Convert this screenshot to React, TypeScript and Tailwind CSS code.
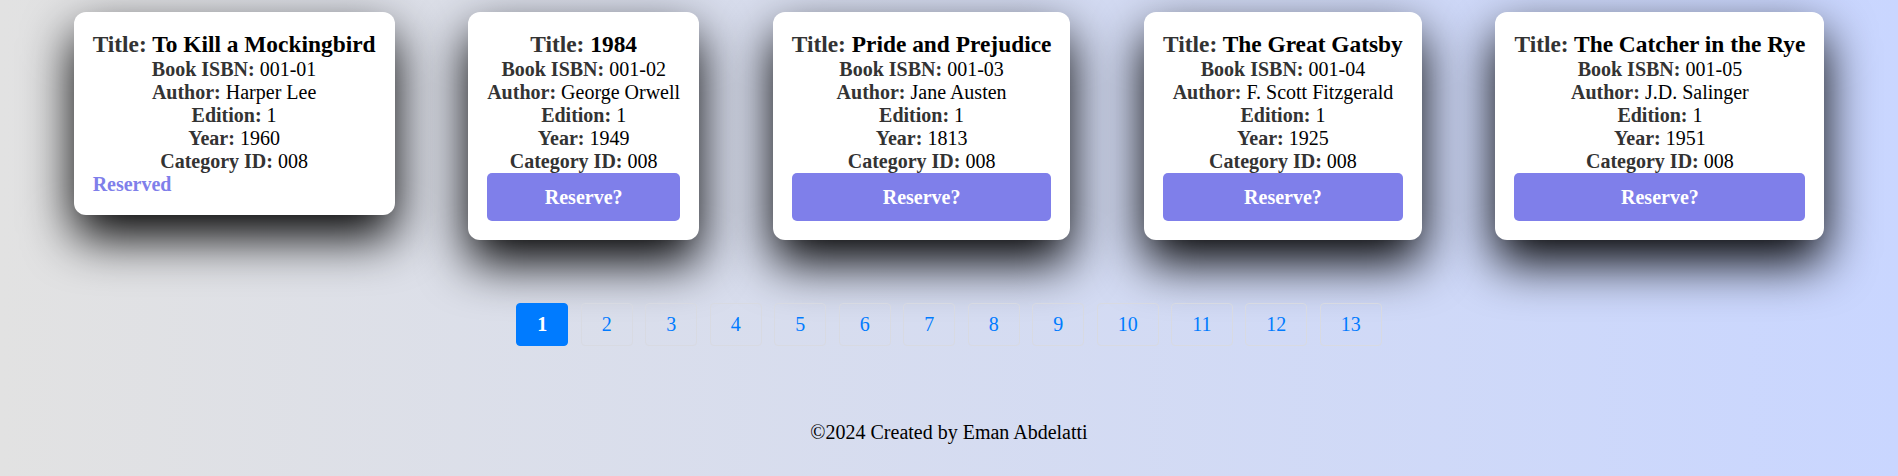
import { useState } from "react";

type Book = {
  isbn: string;
  title: string;
  author: string;
  edition: number;
  year: number;
  categoryId: string;
  reserved: boolean;
};

const BOOKS: Book[] = [
  { isbn: "001-01", title: "To Kill a Mockingbird", author: "Harper Lee", edition: 1, year: 1960, categoryId: "008", reserved: true },
  { isbn: "001-02", title: "1984", author: "George Orwell", edition: 1, year: 1949, categoryId: "008", reserved: false },
  { isbn: "001-03", title: "Pride and Prejudice", author: "Jane Austen", edition: 1, year: 1813, categoryId: "008", reserved: false },
  { isbn: "001-04", title: "The Great Gatsby", author: "F. Scott Fitzgerald", edition: 1, year: 1925, categoryId: "008", reserved: false },
  { isbn: "001-05", title: "The Catcher in the Rye", author: "J.D. Salinger", edition: 1, year: 1951, categoryId: "008", reserved: false },
];

const PAGES = [1, 2, 3, 4, 5, 6, 7, 8, 9, 10, 11, 12, 13];

function Row({ label, value }: { label: string; value: string | number }) {
  return (
    <div className="leading-[23px]">
      <strong className="text-[#333]">{label}:</strong> {value}
    </div>
  );
}

function BookCard({ book, onReserve }: { book: Book; onReserve: () => void }) {
  return (
    <div className="rounded-xl bg-white p-[19px] text-center text-black shadow-[0_22px_50px_#000]">
      <h3 className="text-[23.4px] font-bold leading-[27px]">
        <span className="text-[#333]">Title:</span> {book.title}
      </h3>
      <Row label="Book ISBN" value={book.isbn} />
      <Row label="Author" value={book.author} />
      <Row label="Edition" value={book.edition} />
      <Row label="Year" value={book.year} />
      <Row label="Category ID" value={book.categoryId} />
      {book.reserved ? (
        <div className="text-left font-bold leading-[23px] text-[#7f7fea]">Reserved</div>
      ) : (
        <button
          onClick={onReserve}
          className="flex h-[48px] w-full items-center justify-center rounded-[5px] bg-[#7f7fea] font-bold text-white"
        >
          Reserve?
        </button>
      )}
    </div>
  );
}

export default function App() {
  const [books, setBooks] = useState(BOOKS);
  const [page, setPage] = useState(1);

  function reserve(isbn: string) {
    setBooks(books.map(b => (b.isbn === isbn ? { ...b, reserved: true } : b)));
  }

  return (
    <div className="min-h-screen bg-[linear-gradient(to_right,#e2e2e2,#c9d6ff)] font-['Liberation_Serif','Times_New_Roman',serif] text-[20px] text-black">
      <div className="flex items-start justify-evenly pt-[12px]">
        {books.map(b => (
          <BookCard key={b.isbn} book={b} onReserve={() => reserve(b.isbn)} />
        ))}
      </div>

      <div className="mt-[63px] flex justify-center gap-[12.5px]">
        {PAGES.map(p => (
          <button
            key={p}
            onClick={() => setPage(p)}
            className={`rounded-[4px] border px-[20px] py-[9px] leading-[23px] ${
              page === p
                ? "border-[#007bff] bg-[#007bff] font-bold text-white"
                : "border-[#d8dae2] text-[#007bff]"
            }`}
          >
            {p}
          </button>
        ))}
      </div>

      <footer className="mt-[75px] text-center leading-[23px]">
        ©2024 Created by Eman Abdelatti
      </footer>
    </div>
  );
}
